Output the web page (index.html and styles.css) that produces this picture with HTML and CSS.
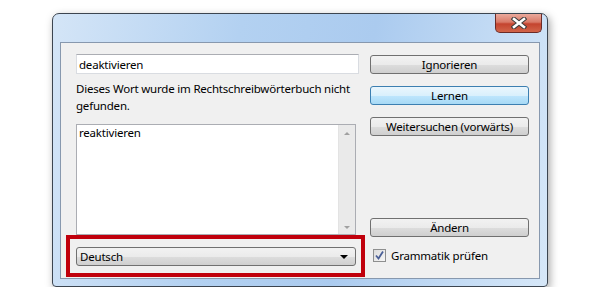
FILE: index.html
```html
<!DOCTYPE html>
<html lang="de">
<head>
    <meta charset="UTF-8">
    <title>Rechtschreibung</title>
    <link rel="stylesheet" href="styles.css">
</head>
<body>
    <div class="window">
        <div class="titlebar">
            <div class="close-btn">
                <svg width="16" height="12" viewBox="0 0 16 12">
                    <path d="M3 2 L13 10 M13 2 L3 10" stroke="#3b3b3b" stroke-width="4.6" stroke-linecap="square"/>
                    <path d="M3 2 L13 10 M13 2 L3 10" stroke="#ffffff" stroke-width="2.6" stroke-linecap="square"/>
                </svg>
            </div>
        </div>
        <div class="panel">
            <div class="left-col">
                <div class="word-input">deaktivieren</div>
                <p class="message">Dieses Wort wurde im Rechtschreibwörterbuch nicht gefunden.</p>
                <div class="listbox">
                    <div class="list-items">
                        <div>reaktivieren</div>
                    </div>
                    <div class="scrollbar">
                        <span class="arrow-up"></span>
                        <span class="arrow-down"></span>
                    </div>
                </div>
                <div class="dropdown">
                    <span>Deutsch</span>
                    <span class="drop-arrow"></span>
                </div>
            </div>
            <div class="right-col">
                <button class="btn">Ignorieren</button>
                <button class="btn btn-default">Lernen</button>
                <button class="btn">Weitersuchen (vorwärts)</button>
                <div class="spacer"></div>
                <button class="btn">Ändern</button>
                <label class="check-row">
                    <span class="checkbox">
                        <svg width="11" height="11" viewBox="0 0 11 11">
                            <path d="M2 5.5 L4.5 8.5 L9 1.5" fill="none" stroke="#4a5f97" stroke-width="1.8"/>
                        </svg>
                    </span>
                    Grammatik prüfen
                </label>
            </div>
        </div>
        <div class="highlight"></div>
    </div>
</body>
</html>
```

FILE: styles.css
```css
body {
    margin: 0;
    padding: 0;
    background-color: #fff;
    font-family: "Noto Sans", "Open Sans", sans-serif;
    font-size: 11.5px;
    letter-spacing: -0.2px;
    color: #000;
}

.window {
    position: relative;
    box-sizing: border-box;
    width: 496px;
    height: 274px;
    margin: 13px 0 0 52px;
    padding: 0 7px 8px 7px;
    border: 1px solid #3c4550;
    border-radius: 7px 7px 4px 4px;
    background: linear-gradient(100deg, #d4e5f7 0%, #b3d1f1 35%, #abcbef 60%, #c6ddf5 85%, #d6e7f8 100%);
    box-shadow: 2px 3px 9px rgba(0, 0, 0, 0.35);
}

.titlebar {
    height: 28px;
    display: flex;
    justify-content: flex-end;
    align-items: flex-start;
    margin-right: -2px;
}

.close-btn {
    width: 47px;
    height: 19px;
    box-sizing: border-box;
    border: 1px solid #6b2b27;
    border-top: none;
    border-radius: 0 0 5px 5px;
    background: linear-gradient(#eaa99c 0%, #d97a68 45%, #c4442f 55%, #d2654a 100%);
    display: flex;
    align-items: center;
    justify-content: center;
}

.panel {
    box-sizing: border-box;
    height: 237px;
    border: 1px solid #8798ae;
    background-color: #f0f0f0;
    padding: 11px 0 0 15px;
    display: flex;
    gap: 11px;
}

.left-col {
    width: 283px;
    display: flex;
    flex-direction: column;
}

.word-input {
    box-sizing: border-box;
    height: 20px;
    padding: 2px 2px;
    line-height: 15px;
    background-color: #fff;
    border: 1px solid #d9dce1;
    border-top-color: #abadb3;
}

.message {
    margin: 6px 0 0 0;
    line-height: 17px;
    width: 283px;
}

.listbox {
    box-sizing: border-box;
    width: 280px;
    height: 111px;
    margin-top: 10px;
    border: 1px solid #abadb3;
    background-color: #fff;
    display: flex;
}

.list-items {
    flex: 1;
    padding: 0 2px;
    line-height: 16px;
}

.scrollbar {
    width: 16px;
    background-color: #eaeaea;
    border-left: 1px solid #e3e3e3;
    display: flex;
    flex-direction: column;
    justify-content: space-between;
    align-items: center;
    padding: 7px 0 5px 0;
}

.arrow-up, .arrow-down {
    width: 0;
    height: 0;
    border-left: 3px solid transparent;
    border-right: 3px solid transparent;
}

.arrow-up {
    border-bottom: 3px solid #a0a0a0;
}

.arrow-down {
    border-top: 3px solid #a0a0a0;
}

.dropdown {
    box-sizing: border-box;
    width: 280px;
    height: 19px;
    margin-top: 12px;
    padding: 0 4px 0 3px;
    border: 1px solid #707070;
    border-radius: 3px;
    background: linear-gradient(#f2f2f2 0%, #ebebeb 50%, #dddddd 51%, #cfcfcf 100%);
    display: flex;
    align-items: center;
    justify-content: space-between;
}

.drop-arrow {
    width: 0;
    height: 0;
    margin-right: 3px;
    border-left: 4px solid transparent;
    border-right: 4px solid transparent;
    border-top: 4px solid #000;
}

.right-col {
    width: 159px;
    display: flex;
    flex-direction: column;
    padding-top: 1px;
    padding-bottom: 15px;
}

.btn {
    box-sizing: border-box;
    height: 19px;
    margin-bottom: 12px;
    padding: 0;
    font-family: inherit;
    font-size: 11.5px;
    letter-spacing: -0.2px;
    color: #000;
    border: 1px solid #707070;
    border-radius: 3px;
    background: linear-gradient(#f2f2f2 0%, #ebebeb 50%, #dddddd 51%, #cfcfcf 100%);
    line-height: 16px;
}

.btn-default {
    border-color: #3c7fb1;
    background: linear-gradient(#eaf6fd 0%, #d9f0fc 50%, #bee6fd 51%, #a7d9f5 100%);
}

.spacer {
    flex: 1;
}

.check-row {
    display: flex;
    align-items: center;
    gap: 5px;
    margin-top: -1px;
    padding-left: 3px;
}

.checkbox {
    box-sizing: border-box;
    width: 13px;
    height: 13px;
    border: 1px solid #8e8f8f;
    background: linear-gradient(135deg, #dcdcdc, #f6f6f6);
    display: flex;
    align-items: center;
    justify-content: center;
}

.highlight {
    position: absolute;
    left: 13px;
    top: 221px;
    width: 299px;
    height: 42px;
    box-sizing: border-box;
    border: 4px solid #c0000c;
}
```
